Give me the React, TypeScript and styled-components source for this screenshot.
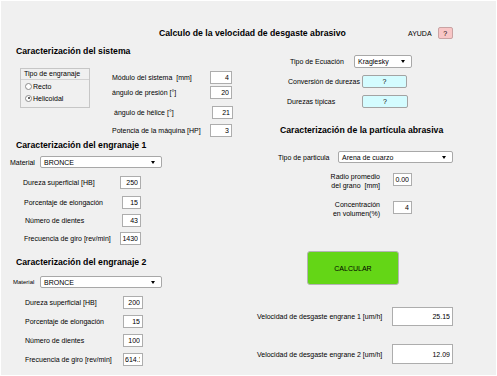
import React from "react";
import styled, { createGlobalStyle } from "styled-components";

const GlobalStyle = createGlobalStyle`
	html, body {
		margin: 0;
		padding: 0;
		background: #ffffff;
	}
	body {
		font-family: "Liberation Sans", Arial, sans-serif;
		color: #000000;
	}
`;

const Window = styled.div`
	width: 497px;
	height: 376px;
	box-sizing: border-box;
	background: #f0f0f0;
	box-shadow: inset 0 0 0 1px #ffffff;
	overflow: hidden;
	font-size: 7px;
`;

const TitleRow = styled.div`
	display: flex;
	align-items: center;
	height: 14px;
	padding: 26px 0 0 159px;
`;

const Title = styled.h1`
	flex: 0 0 249px;
	margin: 0;
	font-size: 8.7px;
	font-weight: bold;
	white-space: nowrap;
`;

const HelpText = styled.span`
	font-size: 7px;
`;

const HelpButton = styled.button`
	margin-left: 6px;
	width: 15px;
	height: 12px;
	padding: 0;
	border: 1px solid #c9a3a3;
	border-radius: 2px;
	background: #f8c6c6;
	font: inherit;
	font-size: 7px;
`;

const Columns = styled.div`
	display: grid;
	grid-template-columns: 250px 247px;
	align-items: start;
`;

const Column = styled.div`
	display: flex;
	flex-direction: column;
	align-items: flex-start;
`;

const SectionTitle = styled.h2<{ $mt: number; $ml: number }>`
	margin: ${(p) => p.$mt}px 0 0 ${(p) => p.$ml}px;
	height: 12px;
	line-height: 12px;
	font-size: 8.7px;
	font-weight: bold;
	white-space: nowrap;
`;

const SystemBody = styled.div`
	display: flex;
	align-items: flex-start;
`;

const RadioPanel = styled.fieldset`
	margin: 11px 0 0 20px;
	padding: 0;
	width: 70px;
	height: 40px;
	box-sizing: border-box;
	border: 1px solid #c6c6c6;
	min-width: 0;
`;

const PanelTitle = styled.div`
	height: 10px;
	line-height: 10px;
	padding-left: 3px;
	border-bottom: 1px solid #d2d2d2;
`;

const RadioOption = styled.label`
	display: flex;
	align-items: center;
	gap: 1px;
	height: 12px;
	padding-left: 4px;
`;

const RadioCircle = styled.span<{ $checked?: boolean }>`
	position: relative;
	width: 7px;
	height: 7px;
	box-sizing: border-box;
	border: 1px solid #8c8c8c;
	border-radius: 50%;
	background: #ffffff;
	&::after {
		content: "";
		display: ${(p) => (p.$checked ? "block" : "none")};
		position: absolute;
		left: 1.5px;
		top: 1.5px;
		width: 2px;
		height: 2px;
		border-radius: 50%;
		background: #333333;
	}
`;

const ParamList = styled.div`
	display: flex;
	flex-direction: column;
	margin: 14px 0 0 22px;
`;

const Row = styled.div<{ $mt: number; $ml: number; $h: number }>`
	display: flex;
	align-items: center;
	margin: ${(p) => p.$mt}px 0 0 ${(p) => p.$ml}px;
	height: ${(p) => p.$h}px;
`;

const TallRow = styled.div<{ $mt: number; $ml: number }>`
	display: flex;
	align-items: flex-start;
	margin: ${(p) => p.$mt}px 0 0 ${(p) => p.$ml}px;
`;

const Label = styled.span<{ $w: number; $size?: number }>`
	flex: 0 0 ${(p) => p.$w}px;
	font-size: ${(p) => p.$size ?? 7}px;
	white-space: nowrap;
`;

const StackLabel = styled.span<{ $w: number }>`
	flex: 0 0 ${(p) => p.$w}px;
	text-align: right;
	line-height: 9px;
	margin-right: 13px;
`;

const NumberBox = styled.input<{ $w: number }>`
	width: ${(p) => p.$w}px;
	height: 100%;
	box-sizing: border-box;
	margin: 0;
	padding: 0 2px 0 1px;
	border: 1px solid #adadad;
	background: #ffffff;
	font-family: inherit;
	font-size: 7px;
	text-align: right;
	color: #000000;
	outline: none;
`;

const SmallBox = styled(NumberBox)`
	height: 13px;
	margin-top: 1px;
`;

const Dropdown = styled.div<{ $w: number }>`
	display: flex;
	align-items: center;
	justify-content: space-between;
	width: ${(p) => p.$w}px;
	height: 100%;
	box-sizing: border-box;
	padding: 0 6px 0 3px;
	border: 1px solid #a8a8a8;
	border-radius: 2px;
	background: #ffffff;
	white-space: nowrap;
`;

const Arrow = styled.span`
	width: 0;
	height: 0;
	border-left: 2.5px solid transparent;
	border-right: 2.5px solid transparent;
	border-top: 3.5px solid #000000;
`;

const InfoButton = styled.button<{ $w: number }>`
	width: ${(p) => p.$w}px;
	height: 100%;
	padding: 0;
	border: 1px solid #a3a3a3;
	border-radius: 2px;
	background: #d4fcff;
	font: inherit;
	font-size: 7px;
`;

const CalcButton = styled.button`
	margin: 33px 0 0 57px;
	width: 92px;
	height: 34px;
	padding: 0;
	border: 1px solid #b4b4b4;
	border-radius: 3px;
	background: #64d616;
	font: inherit;
	font-size: 7px;
`;

function Field({ label, value, mt, ml, lw, bw, h = 13 }: { label: string; value: string; mt: number; ml: number; lw: number; bw: number; h?: number }) {
	return (
		<Row $mt={mt} $ml={ml} $h={h}>
			<Label $w={lw}>{label}</Label>
			<NumberBox $w={bw} defaultValue={value} />
		</Row>
	);
}

function Material({ mt, ml, lw, size }: { mt: number; ml: number; lw: number; size: number }) {
	return (
		<Row $mt={mt} $ml={ml} $h={12}>
			<Label $w={lw} $size={size}>Material</Label>
			<Dropdown $w={122}>
				BRONCE
				<Arrow />
			</Dropdown>
		</Row>
	);
}

export default function App() {
	return (
		<Window>
			<GlobalStyle />
			<TitleRow>
				<Title>Calculo de la velocidad de desgaste abrasivo</Title>
				<HelpText>AYUDA</HelpText>
				<HelpButton>?</HelpButton>
			</TitleRow>
			<Columns>
				<Column>
					<SectionTitle $mt={5} $ml={16}>Caracterización del sistema</SectionTitle>
					<SystemBody>
						<RadioPanel>
							<PanelTitle>Tipo de engranaje</PanelTitle>
							<RadioOption>
								<RadioCircle />
								Recto
							</RadioOption>
							<RadioOption>
								<RadioCircle $checked />
								Helicoidal
							</RadioOption>
						</RadioPanel>
						<ParamList>
							<Field label={"Módulo del sistema \u00a0[mm]"} value="4" mt={0} ml={0} lw={98} bw={22} />
							<Field label="ángulo de presión [°]" value="20" mt={2} ml={0} lw={98} bw={22} />
							<Field label="ángulo de hélice [°]" value="21" mt={7} ml={2} lw={98} bw={21} />
							<Field label="Potencia de la máquina [HP]" value="3" mt={5} ml={0} lw={98} bw={22} />
						</ParamList>
					</SystemBody>

					<SectionTitle $mt={2} $ml={16}>Caracterización del engranaje 1</SectionTitle>
					<Material mt={5} ml={10} lw={30} size={7} />
					<Field label="Dureza superficial [HB]" value="250" mt={8} ml={23} lw={97} bw={21} />
					<Field label="Porcentaje de elongación" value="15" mt={7} ml={24} lw={98} bw={19} />
					<Field label="Número de dientes" value="43" mt={5} ml={25} lw={97} bw={19} />
					<Field label="Frecuencia de giro [rev/min]" value="1430" mt={5} ml={24} lw={96} bw={21} />

					<SectionTitle $mt={11} $ml={16}>Caracterización del engranaje 2</SectionTitle>
					<Material mt={8} ml={13} lw={27} size={6} />
					<Field label="Dureza superficial [HB]" value="200" mt={8} ml={25} lw={98} bw={20} />
					<Field label="Porcentaje de elongación" value="15" mt={6} ml={25} lw={98} bw={20} />
					<Field label="Número de dientes" value="100" mt={6} ml={25} lw={98} bw={20} />
					<Field label="Frecuencia de giro [rev/min]" value="614.1" mt={6} ml={25} lw={98} bw={20} />
				</Column>

				<Column>
					<Row $mt={15} $ml={40} $h={13}>
						<Label $w={64}>Tipo de Ecuación</Label>
						<Dropdown $w={58}>
							Kraglesky
							<Arrow />
						</Dropdown>
					</Row>
					<Row $mt={7} $ml={38} $h={13}>
						<Label $w={74}>Conversión de durezas</Label>
						<InfoButton $w={45}>?</InfoButton>
					</Row>
					<Row $mt={7} $ml={37} $h={13}>
						<Label $w={75}>Durezas típicas</Label>
						<InfoButton $w={46}>?</InfoButton>
					</Row>

					<SectionTitle $mt={16} $ml={30}>Caracterización de la partícula abrasiva</SectionTitle>
					<Row $mt={15} $ml={28} $h={12}>
						<Label $w={60}>Tipo de particula</Label>
						<Dropdown $w={115}>
							Arena de cuarzo
							<Arrow />
						</Dropdown>
					</Row>
					<TallRow $mt={9} $ml={70}>
						<StackLabel $w={60}>
							Radio promedio
							<br />
							del grano &nbsp;[mm]
						</StackLabel>
						<SmallBox $w={19} defaultValue="0.00" />
					</TallRow>
					<TallRow $mt={10} $ml={70}>
						<StackLabel $w={60}>
							Concentración
							<br />
							en volumen(%)
						</StackLabel>
						<SmallBox $w={19} defaultValue="4" />
					</TallRow>

					<CalcButton>CALCULAR</CalcButton>

					<Field label="Velocidad de desgaste engrane 1 [um/h]" value="25.15" mt={22} ml={7} lw={135} bw={61} h={19} />
					<Field label="Velocidad de desgaste engrane 2 [um/h]" value="12.09" mt={18} ml={7} lw={135} bw={61} h={20} />
				</Column>
			</Columns>
		</Window>
	);
}
